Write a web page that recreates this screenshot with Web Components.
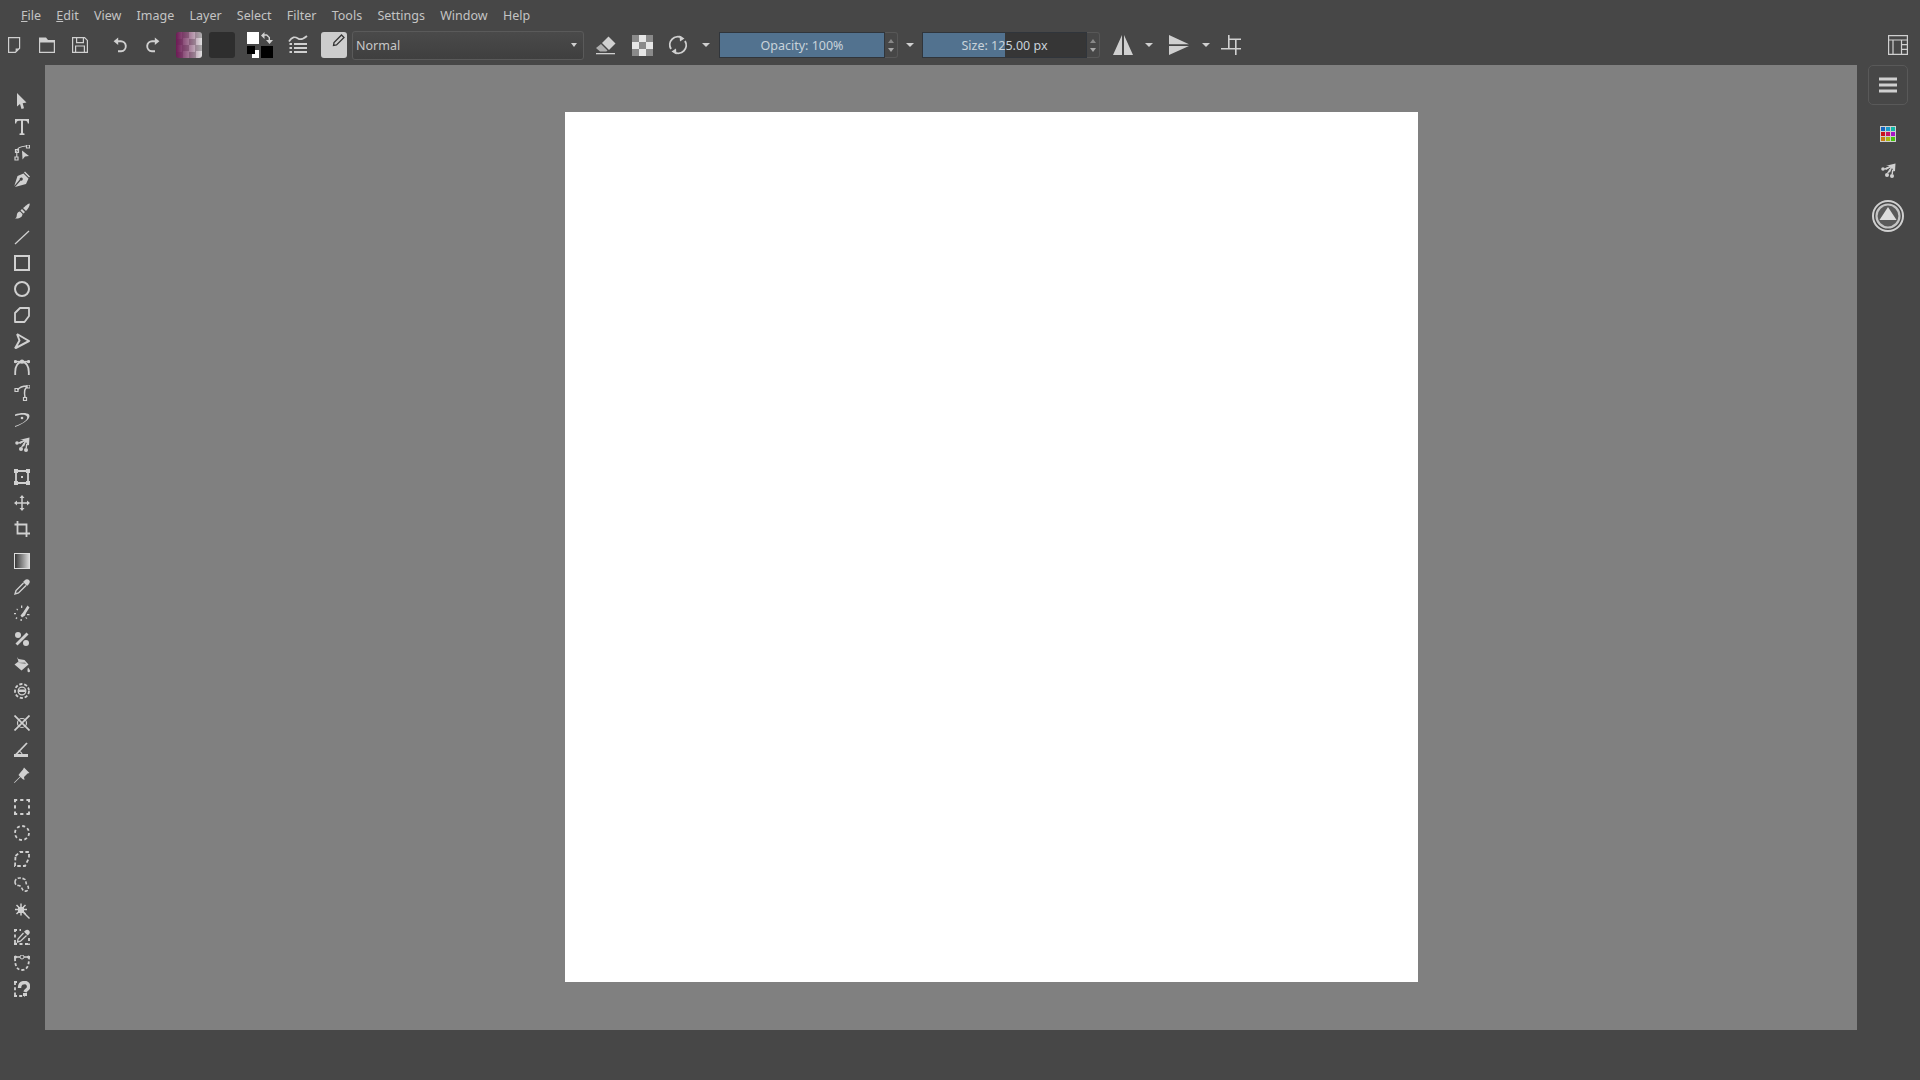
<!DOCTYPE html>
<html><head><meta charset="utf-8"><title>Krita</title>
<style>
html,body{margin:0;padding:0;height:100%;background:#474747}
body{font:12.5px "Noto Sans","DejaVu Sans",sans-serif;color:#c8c8c8;overflow:hidden}
</style></head><body>
<kr-app>
  <kr-menubar>
    <kr-menu mn>File</kr-menu><kr-menu mn>Edit</kr-menu><kr-menu>View</kr-menu><kr-menu>Image</kr-menu><kr-menu>Layer</kr-menu><kr-menu>Select</kr-menu><kr-menu>Filter</kr-menu><kr-menu>Tools</kr-menu><kr-menu>Settings</kr-menu><kr-menu>Window</kr-menu><kr-menu>Help</kr-menu>
  </kr-menubar>
  <kr-toolbar>
    <kr-icon name="new" style="margin-left:6px"></kr-icon>
    <kr-icon name="open" style="margin-left:17px"></kr-icon>
    <kr-icon name="save" style="margin-left:17px"></kr-icon>
    <kr-icon name="undo" style="margin-left:24px"></kr-icon>
    <kr-icon name="redo" style="margin-left:17px"></kr-icon>
    <kr-swatch kind="gradient" style="margin-left:15px"></kr-swatch>
    <kr-swatch kind="pattern" style="margin-left:7px"></kr-swatch>
    <kr-colors style="margin-left:12px"></kr-colors>
    <kr-icon name="presets" size="20" style="margin-left:15px"></kr-icon>
    <kr-swatch kind="edit" style="margin-left:13px"></kr-swatch>
    <kr-combo style="margin-left:5px">Normal</kr-combo>
    <kr-icon name="eraser" size="21" style="margin-left:11px"></kr-icon>
    <kr-icon name="alpha" size="21" style="margin-left:16px"></kr-icon>
    <kr-icon name="reload" size="20" style="margin-left:15px"></kr-icon>
    <kr-drop style="margin-left:14px"></kr-drop>
    <kr-slider fill="100" w="166" style="margin-left:9px">Opacity: 100%</kr-slider>
    <kr-drop style="margin-left:8px"></kr-drop>
    <kr-slider fill="50.3" w="165" style="margin-left:8px">Size: 125.00 px</kr-slider>
    <kr-icon name="mirrorh" size="20" style="margin-left:13px"></kr-icon>
    <kr-drop style="margin-left:12px"></kr-drop>
    <kr-icon name="mirrorv" size="20" style="margin-left:16px"></kr-icon>
    <kr-drop style="margin-left:13px"></kr-drop>
    <kr-icon name="wrap" size="20" style="margin-left:11px"></kr-icon>
    <kr-icon name="layout" size="20" style="margin-left:auto;margin-right:12px"></kr-icon>
  </kr-toolbar>
  <kr-workspace>
    <kr-toolbox>
      <kr-group><kr-icon name="select"></kr-icon><kr-icon name="text"></kr-icon><kr-icon name="shapeedit"></kr-icon><kr-icon name="calligraphy"></kr-icon></kr-group>
      <kr-group><kr-icon name="brush"></kr-icon><kr-icon name="line"></kr-icon><kr-icon name="rect"></kr-icon><kr-icon name="ellipse"></kr-icon><kr-icon name="polygon"></kr-icon><kr-icon name="polyline"></kr-icon><kr-icon name="bezier"></kr-icon><kr-icon name="freepath"></kr-icon><kr-icon name="dyna"></kr-icon><kr-icon name="multi"></kr-icon></kr-group>
      <kr-group><kr-icon name="transform"></kr-icon><kr-icon name="move"></kr-icon><kr-icon name="crop"></kr-icon></kr-group>
      <kr-group><kr-icon name="gradient"></kr-icon><kr-icon name="picker"></kr-icon><kr-icon name="patch"></kr-icon><kr-icon name="colorize"></kr-icon><kr-icon name="fill"></kr-icon><kr-icon name="enclose"></kr-icon></kr-group>
      <kr-group><kr-icon name="assistant"></kr-icon><kr-icon name="measure"></kr-icon><kr-icon name="pin"></kr-icon></kr-group>
      <kr-group><kr-icon name="srect"></kr-icon><kr-icon name="sellipse"></kr-icon><kr-icon name="spoly"></kr-icon><kr-icon name="sfree"></kr-icon><kr-icon name="wand"></kr-icon><kr-icon name="ssimilar"></kr-icon><kr-icon name="sbezier"></kr-icon><kr-icon name="smagnet"></kr-icon></kr-group>
    </kr-toolbox>
    <kr-canvas><kr-paper></kr-paper></kr-canvas>
    <kr-docker>
      <kr-hamburger><kr-icon name="menu" size="18"></kr-icon></kr-hamburger>
      <kr-icon name="palette"></kr-icon>
      <kr-icon name="multi"></kr-icon>
      <kr-icon name="circle" size="32"></kr-icon>
    </kr-docker>
  </kr-workspace>
</kr-app>
<script>
const S='fill="none" stroke="currentColor"';
const ICONS={
new:`<path ${S} stroke-width="1.2" d="M2.6.6h11v10.6l-4.2 4.2H2.6z"/><path fill="currentColor" d="M13 11.600l-3.400 3.400v-3.400z"/>`,
open:`<path fill="currentColor" d="M0 .5h7l2 2.400H16v2.600H0z"/><path ${S} stroke-width="1.2" d="M.6 3v12.400h14.800V3"/>`,
save:`<path ${S} stroke-width="1.2" d="M.6.6h12l2.800 2.800v12H.6z"/><path ${S} stroke-width="1.2" d="M4.600.8v4.800h6.800V.8M3.600 15.200V9h8.800v6.200"/>`,
undo:`<path ${S} stroke-width="1.9" d="M5 4.200h3.500a5 5 0 0 1 .6 10H6"/><path fill="currentColor" d="M6.200.6v7.400L1.600 4.300z"/>`,
redo:`<path ${S} stroke-width="1.9" d="M11 4.200H7.500a5 5 0 0 0-.6 10H10"/><path fill="currentColor" d="M9.800.6v7.400l4.600-3.700z"/>`,
presets:`<path ${S} stroke-width="1.700" d="M1 6.500c3-5 6-5 9-3s6 0 9-2.500"/><path fill="currentColor" d="M6 8h13v2H6zM6 12h13v2H6zM6 16h13v2H6zM1.500 8h2.500v2H1.500zM1.500 12h2.500v2H1.500zM1.500 16h2.500v2H1.500z"/>`,
eraser:`<path fill="currentColor" d="M13.500 1.500l7 7-6.500 6.500-7-7z"/><path fill="currentColor" d="M6 9l6.500 6.500-1.200 1H5L1 13z" opacity=".75"/><path fill="currentColor" d="M1 18h19v1.300H1z"/>`,
alpha:`<path fill="#8a8a8a" d="M0 0h21v21H0z"/><path fill="#e6e6e6" d="M7 0h7v7H7zM0 7h7v7H0zM14 7h7v7h-7zM7 14h7v7H7z"/>`,
reload:`<path ${S} stroke-width="1.9" d="M3 14A8 8 0 0 1 14 3M17 6a8 8 0 0 1-11 11"/><path fill="currentColor" d="M11.500.5l5 3-4.500 3zM8.500 19.500l-5-3 4.500-3z"/>`,
mirrorh:`<path fill="currentColor" d="M9 0v20H0zM11 0l9 20h-9z"/>`,
mirrorv:`<path fill="currentColor" d="M0 0l20 9.200H0zM0 11h20L0 20z"/>`,
wrap:`<path fill="currentColor" d="M7 0h1.600v13H20v1.600H0V13h7zM8 3.500h12v1.600H8zM14 5h1.600v15H14z"/>`,
layout:`<path ${S} stroke-width="1.200" d="M.6 .6h18.800v18.800H.6zM.6 5H19.400M5 5v14.400M13.500 5v14.400M13.500 9.600h5.900M13.500 14.400h5.900"/>`,
select:`<path fill="currentColor" d="M3 0l9.500 9.500-3.800.8 1.300 5-2.500.7-1.500-5L3 13.500z"/>`,
text:`<path fill="currentColor" d="M1 0h14v4.600h-1.200C13.500 2.500 13 1.700 11 1.700H9v11.800c0 .7.500 1 1.500 1v1.500h-5v-1.500c1 0 1.500-.3 1.500-1V1.700H5c-2 0-2.500.8-2.800 2.900H1z"/>`,
shapeedit:`<path ${S} stroke-width="1.100" d="M3 6C3 3 7 1.500 12 1M2.800 6v6"/><path ${S} stroke-width="1.200" d="M1.500 4.500h3v3h-3zM1 12h3v3H1zM12.500 0h3v3h-3z"/><path fill="currentColor" d="M8 5.500L15 11l-4 .5-2.500 3z"/>`,
calligraphy:`<path fill="currentColor" d="M11 .5L16 5.500 15 6.500 10 1.500zM9.500 2.500L14.500 7.500 12 13 1 16 6.700 9.600A1.600 1.600 0 1 0 5.700 8.600L.3 15 3.500 5z"/>`,
brush:`<path fill="currentColor" d="M15.500.500c.8.800-1 5-3.500 7.500l-3-3c2.500-2 5.700-5.300 6.500-4.500zM8 6l3 3-1.500 1.500-3-3zM6 8.500l2.500 2.500c0 3-3 5-7.500 4.500 2-1 1.500-2.500 2-4.500.5-1.500 1.500-2.500 3-2.500z"/>`,
line:`<path ${S} stroke-width="1.300" d="M1 15L15 2"/>`,
rect:`<path ${S} stroke-width="2" d="M1 1h14v14H1z"/>`,
ellipse:`<circle ${S} stroke-width="2" cx="8" cy="8" r="7"/>`,
polygon:`<path ${S} stroke-width="1.800" d="M1 6l5-5h9v8l-4.500 6H1z" stroke-linejoin="round"/>`,
polyline:`<path ${S} stroke-width="2" d="M3 1l12 7L1 15.500M3 1l2.500 6.500L1 15.500" stroke-linejoin="round"/>`,
bezier:`<path ${S} stroke-width="1.800" d="M1.200 16V13C1.200 7 4 3 8 3s6.800 4 6.800 10v3"/><path ${S} stroke-width="1.500" d="M0 2.600h16"/><circle cx="8" cy="2.600" r="2.200" fill="currentColor"/><circle cx="1.500" cy="2.600" r="1.700" fill="currentColor"/><circle cx="14.500" cy="2.600" r="1.700" fill="currentColor"/>`,
freepath:`<path ${S} stroke-width="1.500" d="M3.500 5C6 1.500 9 1 13 1M13.500 2C10 3 10 7 11 12.500"/><path ${S} stroke-width="1.200" d="M1 3.500h3v3H1zM13 .0h3v3h-3zM9.500 12.500h3v3h-3z"/>`,
dyna:`<path fill="currentColor" d="M1 3.500c5-2 12-2 14 0 1.500 2 0 7-14 12.500v-1C11 11.500 14 8 13 5.500 11.500 3 7 3.500 1 5z"/><circle cx="8" cy="7" r="1.300" fill="currentColor"/>`,
multi:`<path fill="currentColor" d="M15.500.500L15 8l-1.500 .5L12 5 10 9.500 8.500 9l2-4.500L6 7 5 5.500 9.500 3 6 2.800z"/><circle cx="3" cy="6" r="1.800" fill="currentColor"/><circle cx="7" cy="12" r="2" fill="currentColor"/><circle cx="12" cy="13" r="2" fill="currentColor"/><path fill="currentColor" d="M4 5.500l4-1.500.3 1-3.500 1.800zM7 10l2.500-4 1 .6-2.200 4zM11.500 11l.5-4h1.200l-.2 4z"/>`,
transform:`<path ${S} stroke-width="1.800" d="M2 3.500v9M14 3.500v9M3.500 2h9M3.500 14h9"/><path fill="currentColor" d="M0 0h4v4H0zM12 0h4v4h-4zM0 12h4v4H0zM12 12h4v4h-4zM7 7h2v2H7z"/>`,
move:`<path ${S} stroke-width="1.500" d="M8 2v12M2 8h12"/><path fill="currentColor" d="M8 0l2.500 3h-5zM8 16l2.500-3h-5zM0 8l3-2.500v5zM16 8l-3-2.500v5z"/>`,
crop:`<path ${S} stroke-width="1.800" d="M3.500 0v12.500H16M.5 3.500H12.500V16"/>`,
gradient:`<defs><linearGradient id="g"><stop offset="0" stop-color="#333"/><stop offset="1" stop-color="#ddd"/></linearGradient></defs><rect x=".5" y=".5" width="15" height="15" fill="url(#g)" stroke="#ddd"/>`,
picker:`<path fill="currentColor" d="M15 1c1.300 1.300 1 3-.5 4.500l-1.500 1.500-4-4 1.500-1.500C12 0 13.700 0 15 1z"/><path ${S} stroke-width="1.400" d="M9.500 4L2 11.500 1 15l3.500-1L12 6.500"/>`,
patch:`<path fill="currentColor" d="M13.500 .500l2 2L12 8l-1 2.500-3 2-1.500-2L9 7.500z"/><path fill="currentColor" d="M3 3.500l1.200 1.200-.7.700-1.200-1.200zM0 8h2v1.200H0zM2.500 12l1 1-1.200 1.200-.8-.9zM6.500 14h1.300v2H6.500zM12 12l1.300 1.300-.8.7-1.200-1.200zM13 9h2.500v1.200H13zM7 .5h1.300V3H7z"/>`,
colorize:`<path ${S} stroke-width="2.800" d="M2.500 13.500L13.500 2.500"/><circle cx="4" cy="4" r="3" fill="currentColor"/><circle cx="12" cy="12" r="3" fill="currentColor"/>`,
fill:`<path fill="currentColor" d="M3 0l1.500 2L10.500 3l4 4.500-7 6-7-6L4.500 4.500z"/><path fill="#474747" d="M3.500 5.800L11 5.500l1 1.500z" opacity=".6"/><path fill="currentColor" d="M14 10.500c1.300 1.500 2 2.500 2 3.500a1.200 1.200 0 0 1-2.500 0c0-1 0-2.300.5-3.500z"/>`,
enclose:`<circle ${S} stroke-width="1.800" cx="8" cy="8" r="7" stroke-dasharray="3.200 1.800"/><circle ${S} stroke-width="1.300" cx="8" cy="8" r="3.800"/><path fill="currentColor" d="M4.500 6.500h7v2.500h-7z"/>`,
assistant:`<path ${S} stroke-width="1.700" d="M.5.5l15 15M15.500.5l-15 15"/><circle ${S} stroke-width="1.200" cx="8" cy="8" r="4.500"/>`,
measure:`<path ${S} stroke-width="1.800" d="M1.500 14L13 2"/><path fill="currentColor" d="M4.500 9.500a6 6 0 0 1 4.500 5H8a5 5 0 0 0-4-4z"/><path fill="currentColor" d="M0 13h14v3H0z"/>`,
pin:`<path fill="currentColor" d="M10 .500L15.500 6l-2 .5-3.500 3.500.500 3L8.500 12 4.500 8 6 6l3-3.500zM6.500 10l-6 6-.500-.5 6-6z"/>`,
srect:`<path ${S} stroke-width="2" d="M1 0v16M15 0v16M0 1h16M0 15h16" stroke-dasharray="3.200 3"/>`,
sellipse:`<circle ${S} stroke-width="1.800" cx="8" cy="8" r="7" stroke-dasharray="3 2.500"/>`,
spoly:`<path ${S} stroke-width="1.800" d="M1.500 5L6 1h9v6l-4 8H1z" stroke-dasharray="3.500 2.200"/>`,
sfree:`<path ${S} stroke-width="1.600" d="M1 5C1 1 6 0 10 2c3 1 1 4 3 6 3 3 1 7-3 6C8 13 8 10 6 9 3 8 1 8 1 5z" stroke-dasharray="3.200 1.600"/>`,
wand:`<path ${S} stroke-width="1.500" d="M7 .5v12M1 6.500h12M2.500 2l9 9M11.500 2l-9 9"/><path fill="currentColor" d="M4 4h6v6H4z"/><path ${S} stroke-width="1.400" d="M9 9l6.500 6.500"/>`,
ssimilar:`<path ${S} stroke-width="1.800" d="M1 0v16M15 9v7M0 1h7M0 15h16" stroke-dasharray="3 2.500"/><path fill="currentColor" d="M15 1.500c1.300 1.300 1 2.800-.3 4l-1 1-3.700-3.700 1-1C12.200.600 13.800.300 15 1.500z"/><path ${S} stroke-width="1.300" d="M9.500 4L4 10 3.500 13l3-.8L12.500 6.500"/>`,
sbezier:`<path ${S} stroke-width="1.800" d="M1 3C1 11 3 15 8 15s7-4 7-12" stroke-dasharray="3 2"/><path ${S} stroke-width="1.500" d="M0 2h16"/><circle cx="8" cy="2" r="2" fill="#474747" stroke="currentColor"/><circle cx="1.500" cy="2" r="1.500" fill="currentColor"/><circle cx="14.500" cy="2" r="1.500" fill="currentColor"/>`,
smagnet:`<path ${S} stroke-width="1.800" d="M1 1v15M0 15h11M0 1h4" stroke-dasharray="3 2.200"/><path ${S} stroke-width="3.400" d="M5.500 7C5.500 2 9 1.500 11 1.500s4 2 3.500 5c-.3 2-3 2.500-3.500 4.500"/><path fill="currentColor" d="M9 12h4v3H9z"/>`,
menu:`<path fill="currentColor" d="M0 1.500h18v3H0zM0 7.500h18v3H0zM0 13.500h18v3H0z"/>`,
palette:`<path fill="#cfcfcf" d="M0 0h16v16H0z"/><path fill="#1565c0" d="M1 1h4v4H1z"/><path fill="#1a9ac9" d="M6 1h4v4H6z"/><path fill="#12b8a8" d="M11 1h4v4h-4z"/><path fill="#c8101a" d="M1 6h4v4H1z"/><path fill="#c21368" d="M6 6h4v4H6z"/><path fill="#a514c5" d="M11 6h4v4h-4z"/><path fill="#c97c10" d="M1 11h4v4H1z"/><path fill="#a8b810" d="M6 11h4v4H6z"/><path fill="#46c40f" d="M11 11h4v4h-4z"/>`,
circle:`<circle ${S} stroke-width="2" cx="16" cy="16" r="15"/><circle cx="16" cy="16" r="11.500" fill="#5a5a5a" stroke="#c4c4c4" stroke-width="2.200"/><path fill="#dcdcdc" d="M16 7l8.500 13h-17z"/>`
};
const VB={presets:20,eraser:21,alpha:21,reload:20,mirrorh:20,mirrorv:20,wrap:20,layout:20,menu:18,circle:32};
function def(name,css,html,extra){
  customElements.define(name,class extends HTMLElement{
    constructor(){super();this.attachShadow({mode:'open'}).innerHTML=`<style>${css}</style>${html}`;}
    connectedCallback(){if(extra)extra(this)}
  });
}
def('kr-app',':host{display:flex;flex-direction:column;width:1920px;height:1080px;background:#474747}','<slot></slot>');
def('kr-menubar',':host{display:flex;gap:15.25px;height:28px;padding-left:21px;align-items:center;box-sizing:border-box;padding-top:3px;flex:none}','<slot></slot>');
def('kr-menu',':host{display:block;line-height:16px;color:#c4c4c4} :host([mn]) span::first-letter{text-decoration:underline} span{display:inline-block}','<span><slot></slot></span>');
def('kr-toolbar',':host{display:flex;align-items:center;height:26px;margin:4px 0 7px;flex:none}','<slot></slot>');
def('kr-workspace',':host{display:flex;height:965px;flex:none}','<slot></slot>');
def('kr-toolbox',':host{display:flex;flex-direction:column;gap:6px;width:45px;padding:23px 1px 0 0;box-sizing:border-box;flex:none}','<slot></slot>');
def('kr-group',':host{display:flex;flex-direction:column;align-items:center}::slotted(kr-icon){height:26px;align-items:center}','<slot></slot>');
def('kr-canvas',':host{display:block;width:1812px;flex:none;background:#808080;padding:47px 0 0 520px;box-sizing:border-box}','<slot></slot>');
def('kr-paper',':host{display:block;width:853px;height:870px;background:#fff}','');
def('kr-docker',':host{display:flex;flex-direction:column;align-items:center;gap:21px;width:63px;padding-right:1px;box-sizing:border-box;flex:none}','<slot></slot>');
def('kr-hamburger',':host{display:flex;width:40px;height:40px;align-items:center;justify-content:center;border:1px solid #595959;border-radius:5px;box-sizing:border-box}','<slot></slot>');
def('kr-icon',':host{display:flex;flex:none;color:#d0d0d0} svg{display:block}','<svg></svg>',el=>{
  const n=el.getAttribute('name'),sz=el.getAttribute('size')||16,vb=VB[n]||16,svg=el.shadowRoot.querySelector('svg');
  svg.setAttribute('width',sz);svg.setAttribute('height',sz);svg.setAttribute('viewBox',`0 0 ${vb} ${vb}`);
  svg.innerHTML=ICONS[n]||'';
});
def('kr-swatch',`:host{display:block;width:26px;height:26px;border-radius:3px;flex:none;overflow:hidden;position:relative}
:host([kind=gradient]){background:linear-gradient(90deg,#6d1a55,rgba(120,40,95,.55) 50%,rgba(255,255,255,.2)),repeating-conic-gradient(#9a9a9a 0 25%,#d8d8d8 0 50%) 0 0/13px 13px}
:host([kind=pattern]){background:#2e2e2e}
:host([kind=edit]){background:#cdcdcd}
svg{position:absolute;left:11px;top:2px}`,'<svg width="13" height="13" viewBox="0 0 13 13"><path fill="none" stroke="#333" stroke-width="1.300" d="M9.500 1L12 3.500 4.500 11 1.500 11.500 2 8.500z"/></svg>',el=>{if(el.getAttribute('kind')!=='edit')el.shadowRoot.querySelector('svg').remove();});
def('kr-colors',':host{display:block;width:26px;height:26px;position:relative;flex:none} i{position:absolute;display:block} svg{position:absolute;left:14px;top:0}',
 '<i style="left:0;top:0;width:12px;height:12px;background:#fff"></i><i style="left:14px;top:14px;width:12px;height:12px;background:#000"></i><i style="left:5px;top:18px;width:7px;height:8px;background:#fff"></i><i style="left:0;top:14px;width:8px;height:8px;background:#000"></i><svg width="12" height="12" viewBox="0 0 12 12"><path fill="#d0d0d0" d="M0 3.500L3.500 0v2.200h2.500l3 3V8H12l-3.500 4L5 8h2.600V5.800L5.500 3.800h-2V7z"/></svg>');
def('kr-combo',`:host{display:flex;align-items:center;justify-content:space-between;width:232px;height:29px;box-sizing:border-box;border:1px solid #5a5a5a;border-radius:3px;background:linear-gradient(#4a4a4a,#3f3f3f);padding:0 6px 0 3px;flex:none;color:#c8c8c8}
i{display:block;width:0;height:0;border:3.500px solid transparent;border-top:4px solid #d0d0d0;border-bottom:0}`,'<span><slot></slot></span><i></i>');
def('kr-drop',':host{display:block;width:0;height:0;border:4px solid transparent;border-top:4px solid #d0d0d0;border-bottom:0;flex:none}','');
def('kr-slider',`:host{display:flex;flex:none;height:26px}
.b{position:relative;height:26px;box-sizing:border-box;border:1px solid #30353b;background:#363636;overflow:hidden;display:flex;align-items:center;justify-content:center;color:#c9d2da}
.f{position:absolute;left:0;top:0;bottom:0;background:#52728f}
.t{position:relative}
.s{width:13px;height:26px;box-sizing:border-box;border:1px solid #575757;border-left:0;border-radius:0 3px 3px 0;display:flex;flex-direction:column;align-items:center;justify-content:space-around;padding:3px 0}
.s i{display:block;width:0;height:0;border:3px solid transparent}
.u{border-bottom:4px solid #888!important;border-top:0!important}.d{border-top:4px solid #a8a8a8!important;border-bottom:0!important}`,
 '<div class="b"><div class="f"></div><span class="t"><slot></slot></span></div><div class="s"><i class="u"></i><i class="d"></i></div>',el=>{el.shadowRoot.querySelector('.f').style.width=el.getAttribute('fill')+'%';el.shadowRoot.querySelector('.b').style.width=el.getAttribute('w')+'px';});
</script>
</body></html>
